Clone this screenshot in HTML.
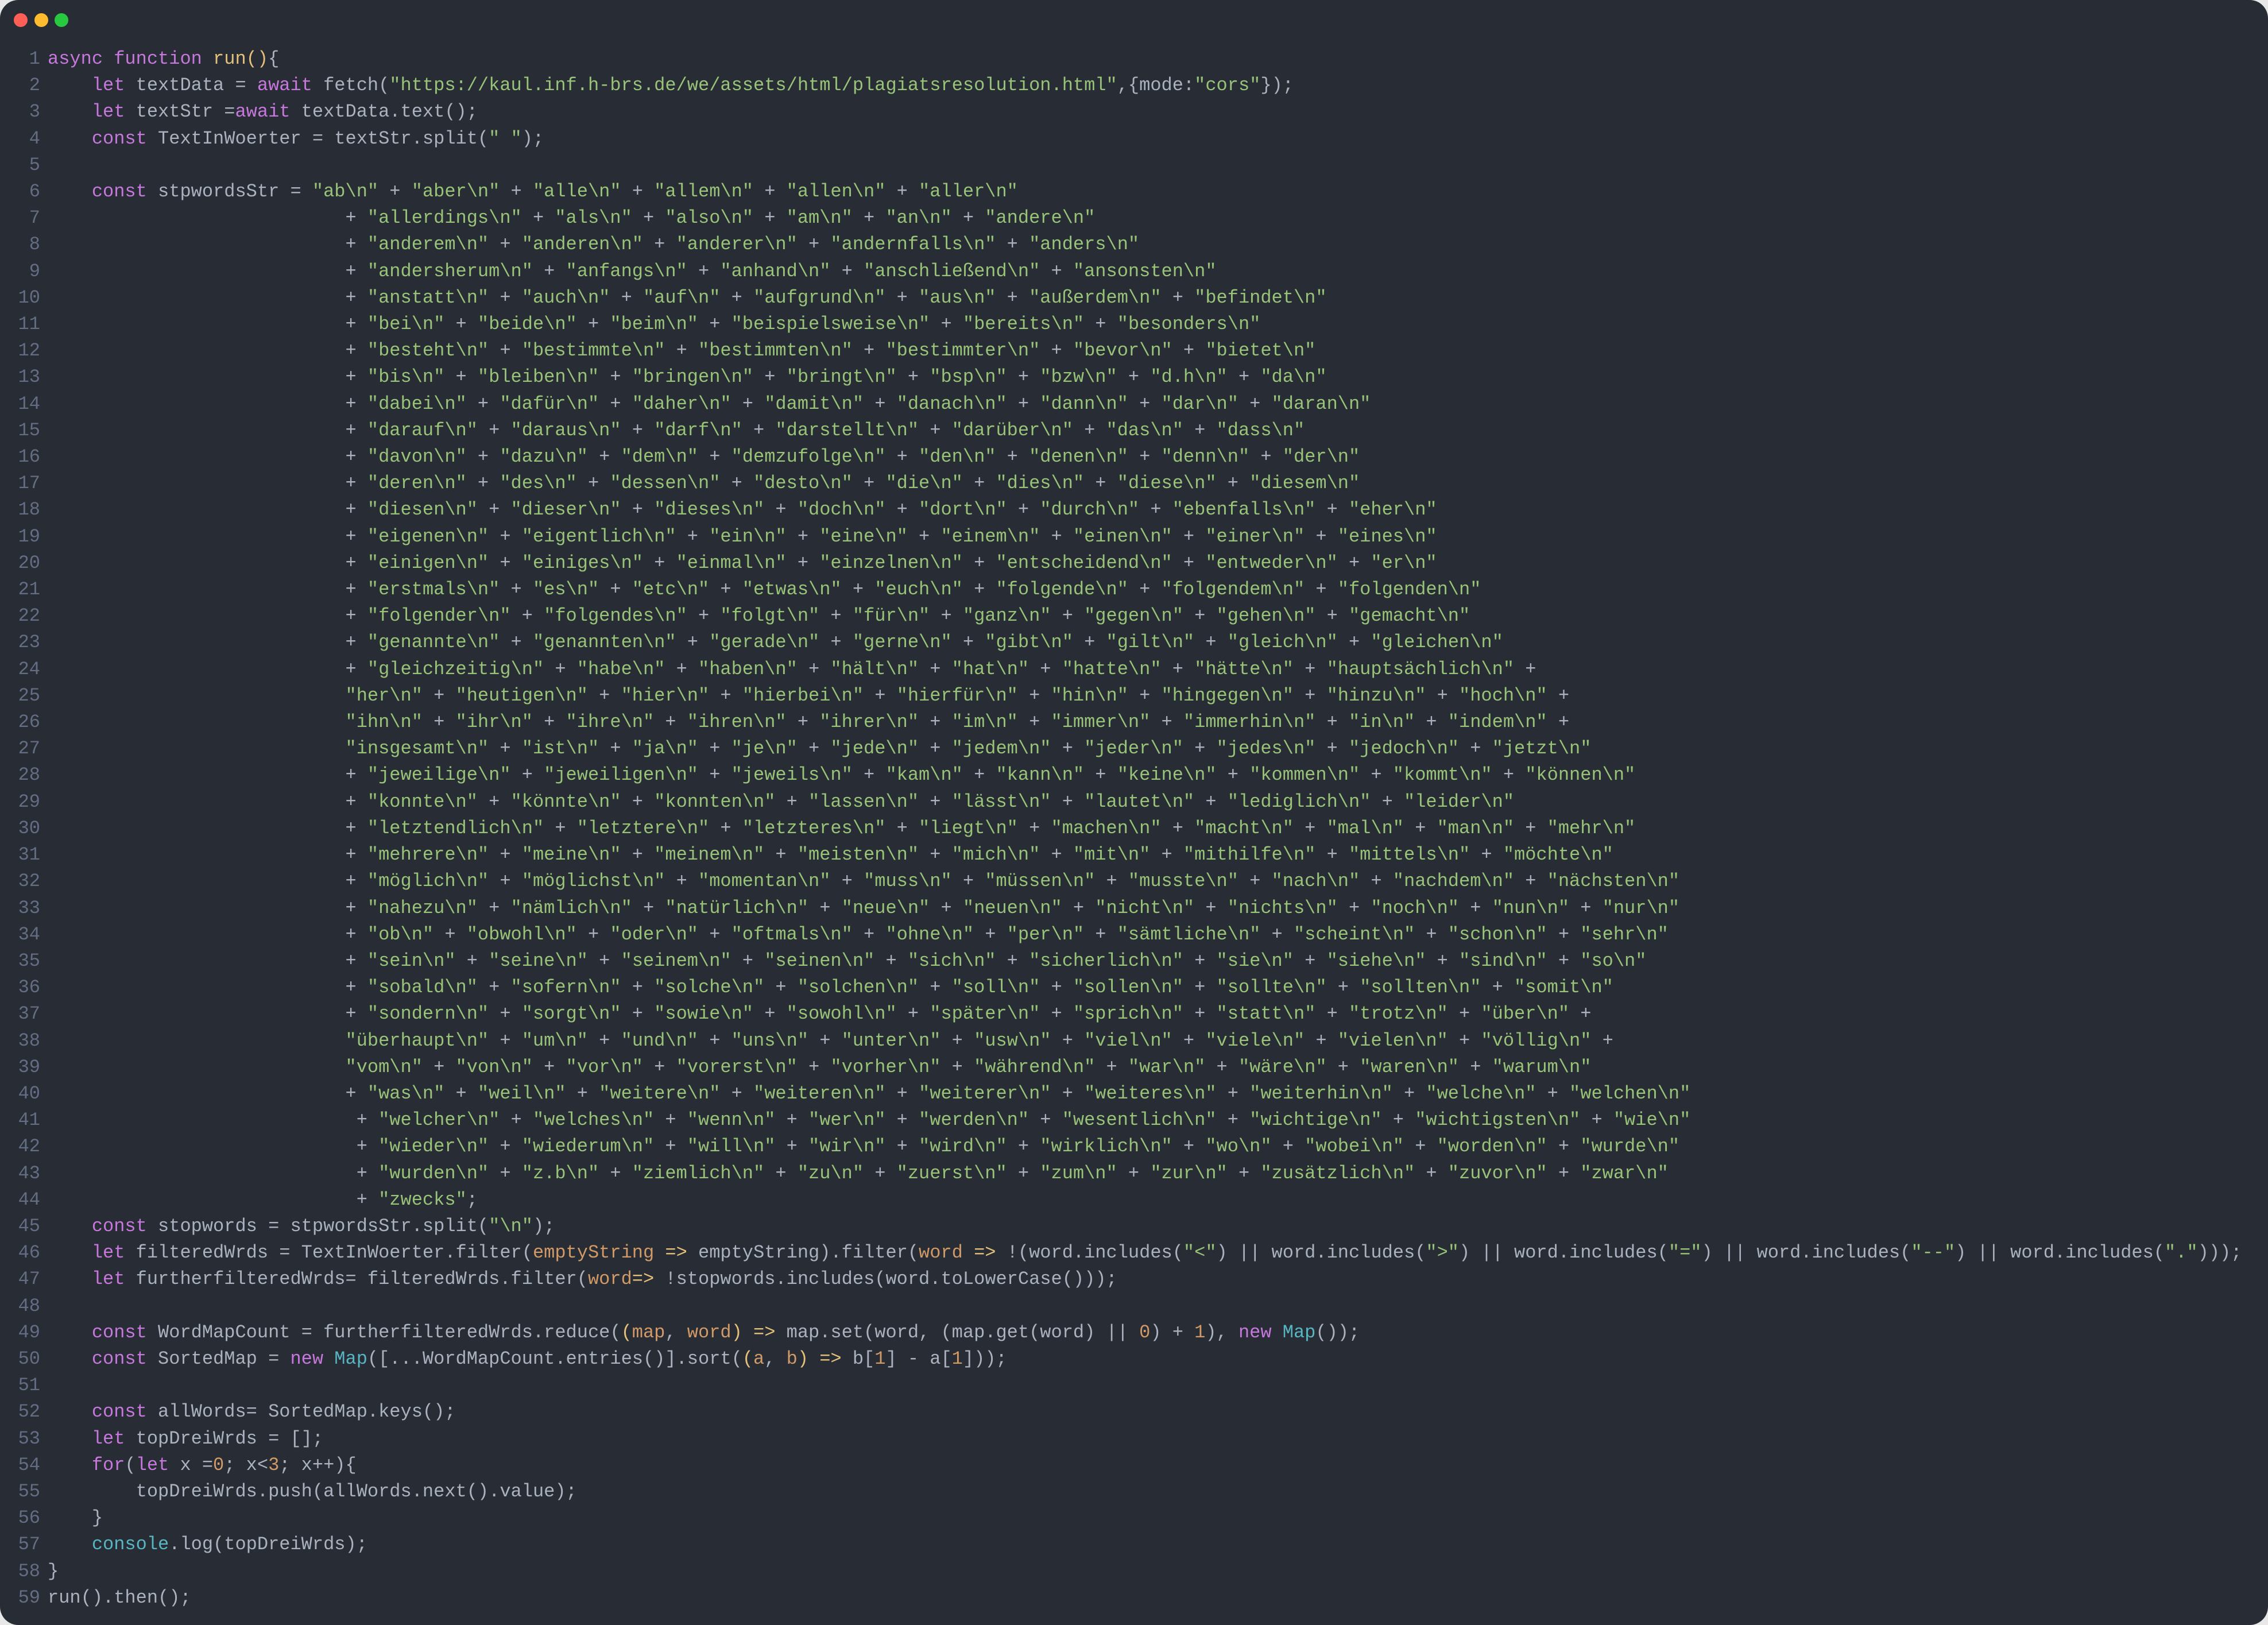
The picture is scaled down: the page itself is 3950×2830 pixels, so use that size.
<!DOCTYPE html>
<html><head><meta charset="utf-8">
<style>
html,body{margin:0;padding:0;width:3950px;height:2830px;background:#e8e8e8;overflow:hidden}
.win{position:absolute;left:0;top:0;width:3950px;height:2830px;background:#282c34;border-radius:32px;overflow:hidden}
.dot{position:absolute;top:23px;width:24px;height:24px;border-radius:50%}
.num{position:absolute;left:0;top:80px;width:70px;text-align:right;color:#636d83}
pre,.num{font-family:"Liberation Mono",monospace;font-size:32px;line-height:46.2px;margin:0}
pre{position:absolute;left:83px;top:80px;color:#abb2bf}
.k{color:#c678dd}.s{color:#98c379}.f{color:#e5c07b}.p{color:#d19a66}.c{color:#56b6c2}
</style></head><body>
<div class="win">
<div class="dot" style="left:24px;background:#ff5f57"></div>
<div class="dot" style="left:60px;background:#febc2e"></div>
<div class="dot" style="left:95px;background:#28c840"></div>
<pre class="num">1
2
3
4
5
6
7
8
9
10
11
12
13
14
15
16
17
18
19
20
21
22
23
24
25
26
27
28
29
30
31
32
33
34
35
36
37
38
39
40
41
42
43
44
45
46
47
48
49
50
51
52
53
54
55
56
57
58
59</pre>
<pre><span class="k">async</span> <span class="k">function</span> <span class="f">run()</span>{
    <span class="k">let</span> textData = <span class="k">await</span> fetch(<span class="s">"https://kaul.inf.h-brs.de/we/assets/html/plagiatsresolution.html"</span>,{mode:<span class="s">"cors"</span>});
    <span class="k">let</span> textStr =<span class="k">await</span> textData.text();
    <span class="k">const</span> TextInWoerter = textStr.split(<span class="s">" "</span>);

    <span class="k">const</span> stpwordsStr = <span class="s">"ab\n"</span> + <span class="s">"aber\n"</span> + <span class="s">"alle\n"</span> + <span class="s">"allem\n"</span> + <span class="s">"allen\n"</span> + <span class="s">"aller\n"</span>
                           + <span class="s">"allerdings\n"</span> + <span class="s">"als\n"</span> + <span class="s">"also\n"</span> + <span class="s">"am\n"</span> + <span class="s">"an\n"</span> + <span class="s">"andere\n"</span>
                           + <span class="s">"anderem\n"</span> + <span class="s">"anderen\n"</span> + <span class="s">"anderer\n"</span> + <span class="s">"andernfalls\n"</span> + <span class="s">"anders\n"</span>
                           + <span class="s">"andersherum\n"</span> + <span class="s">"anfangs\n"</span> + <span class="s">"anhand\n"</span> + <span class="s">"anschließend\n"</span> + <span class="s">"ansonsten\n"</span>
                           + <span class="s">"anstatt\n"</span> + <span class="s">"auch\n"</span> + <span class="s">"auf\n"</span> + <span class="s">"aufgrund\n"</span> + <span class="s">"aus\n"</span> + <span class="s">"außerdem\n"</span> + <span class="s">"befindet\n"</span>
                           + <span class="s">"bei\n"</span> + <span class="s">"beide\n"</span> + <span class="s">"beim\n"</span> + <span class="s">"beispielsweise\n"</span> + <span class="s">"bereits\n"</span> + <span class="s">"besonders\n"</span>
                           + <span class="s">"besteht\n"</span> + <span class="s">"bestimmte\n"</span> + <span class="s">"bestimmten\n"</span> + <span class="s">"bestimmter\n"</span> + <span class="s">"bevor\n"</span> + <span class="s">"bietet\n"</span>
                           + <span class="s">"bis\n"</span> + <span class="s">"bleiben\n"</span> + <span class="s">"bringen\n"</span> + <span class="s">"bringt\n"</span> + <span class="s">"bsp\n"</span> + <span class="s">"bzw\n"</span> + <span class="s">"d.h\n"</span> + <span class="s">"da\n"</span>
                           + <span class="s">"dabei\n"</span> + <span class="s">"dafür\n"</span> + <span class="s">"daher\n"</span> + <span class="s">"damit\n"</span> + <span class="s">"danach\n"</span> + <span class="s">"dann\n"</span> + <span class="s">"dar\n"</span> + <span class="s">"daran\n"</span>
                           + <span class="s">"darauf\n"</span> + <span class="s">"daraus\n"</span> + <span class="s">"darf\n"</span> + <span class="s">"darstellt\n"</span> + <span class="s">"darüber\n"</span> + <span class="s">"das\n"</span> + <span class="s">"dass\n"</span>
                           + <span class="s">"davon\n"</span> + <span class="s">"dazu\n"</span> + <span class="s">"dem\n"</span> + <span class="s">"demzufolge\n"</span> + <span class="s">"den\n"</span> + <span class="s">"denen\n"</span> + <span class="s">"denn\n"</span> + <span class="s">"der\n"</span>
                           + <span class="s">"deren\n"</span> + <span class="s">"des\n"</span> + <span class="s">"dessen\n"</span> + <span class="s">"desto\n"</span> + <span class="s">"die\n"</span> + <span class="s">"dies\n"</span> + <span class="s">"diese\n"</span> + <span class="s">"diesem\n"</span>
                           + <span class="s">"diesen\n"</span> + <span class="s">"dieser\n"</span> + <span class="s">"dieses\n"</span> + <span class="s">"doch\n"</span> + <span class="s">"dort\n"</span> + <span class="s">"durch\n"</span> + <span class="s">"ebenfalls\n"</span> + <span class="s">"eher\n"</span>
                           + <span class="s">"eigenen\n"</span> + <span class="s">"eigentlich\n"</span> + <span class="s">"ein\n"</span> + <span class="s">"eine\n"</span> + <span class="s">"einem\n"</span> + <span class="s">"einen\n"</span> + <span class="s">"einer\n"</span> + <span class="s">"eines\n"</span>
                           + <span class="s">"einigen\n"</span> + <span class="s">"einiges\n"</span> + <span class="s">"einmal\n"</span> + <span class="s">"einzelnen\n"</span> + <span class="s">"entscheidend\n"</span> + <span class="s">"entweder\n"</span> + <span class="s">"er\n"</span>
                           + <span class="s">"erstmals\n"</span> + <span class="s">"es\n"</span> + <span class="s">"etc\n"</span> + <span class="s">"etwas\n"</span> + <span class="s">"euch\n"</span> + <span class="s">"folgende\n"</span> + <span class="s">"folgendem\n"</span> + <span class="s">"folgenden\n"</span>
                           + <span class="s">"folgender\n"</span> + <span class="s">"folgendes\n"</span> + <span class="s">"folgt\n"</span> + <span class="s">"für\n"</span> + <span class="s">"ganz\n"</span> + <span class="s">"gegen\n"</span> + <span class="s">"gehen\n"</span> + <span class="s">"gemacht\n"</span>
                           + <span class="s">"genannte\n"</span> + <span class="s">"genannten\n"</span> + <span class="s">"gerade\n"</span> + <span class="s">"gerne\n"</span> + <span class="s">"gibt\n"</span> + <span class="s">"gilt\n"</span> + <span class="s">"gleich\n"</span> + <span class="s">"gleichen\n"</span>
                           + <span class="s">"gleichzeitig\n"</span> + <span class="s">"habe\n"</span> + <span class="s">"haben\n"</span> + <span class="s">"hält\n"</span> + <span class="s">"hat\n"</span> + <span class="s">"hatte\n"</span> + <span class="s">"hätte\n"</span> + <span class="s">"hauptsächlich\n"</span> +
                           <span class="s">"her\n"</span> + <span class="s">"heutigen\n"</span> + <span class="s">"hier\n"</span> + <span class="s">"hierbei\n"</span> + <span class="s">"hierfür\n"</span> + <span class="s">"hin\n"</span> + <span class="s">"hingegen\n"</span> + <span class="s">"hinzu\n"</span> + <span class="s">"hoch\n"</span> +
                           <span class="s">"ihn\n"</span> + <span class="s">"ihr\n"</span> + <span class="s">"ihre\n"</span> + <span class="s">"ihren\n"</span> + <span class="s">"ihrer\n"</span> + <span class="s">"im\n"</span> + <span class="s">"immer\n"</span> + <span class="s">"immerhin\n"</span> + <span class="s">"in\n"</span> + <span class="s">"indem\n"</span> +
                           <span class="s">"insgesamt\n"</span> + <span class="s">"ist\n"</span> + <span class="s">"ja\n"</span> + <span class="s">"je\n"</span> + <span class="s">"jede\n"</span> + <span class="s">"jedem\n"</span> + <span class="s">"jeder\n"</span> + <span class="s">"jedes\n"</span> + <span class="s">"jedoch\n"</span> + <span class="s">"jetzt\n"</span>
                           + <span class="s">"jeweilige\n"</span> + <span class="s">"jeweiligen\n"</span> + <span class="s">"jeweils\n"</span> + <span class="s">"kam\n"</span> + <span class="s">"kann\n"</span> + <span class="s">"keine\n"</span> + <span class="s">"kommen\n"</span> + <span class="s">"kommt\n"</span> + <span class="s">"können\n"</span>
                           + <span class="s">"konnte\n"</span> + <span class="s">"könnte\n"</span> + <span class="s">"konnten\n"</span> + <span class="s">"lassen\n"</span> + <span class="s">"lässt\n"</span> + <span class="s">"lautet\n"</span> + <span class="s">"lediglich\n"</span> + <span class="s">"leider\n"</span>
                           + <span class="s">"letztendlich\n"</span> + <span class="s">"letztere\n"</span> + <span class="s">"letzteres\n"</span> + <span class="s">"liegt\n"</span> + <span class="s">"machen\n"</span> + <span class="s">"macht\n"</span> + <span class="s">"mal\n"</span> + <span class="s">"man\n"</span> + <span class="s">"mehr\n"</span>
                           + <span class="s">"mehrere\n"</span> + <span class="s">"meine\n"</span> + <span class="s">"meinem\n"</span> + <span class="s">"meisten\n"</span> + <span class="s">"mich\n"</span> + <span class="s">"mit\n"</span> + <span class="s">"mithilfe\n"</span> + <span class="s">"mittels\n"</span> + <span class="s">"möchte\n"</span>
                           + <span class="s">"möglich\n"</span> + <span class="s">"möglichst\n"</span> + <span class="s">"momentan\n"</span> + <span class="s">"muss\n"</span> + <span class="s">"müssen\n"</span> + <span class="s">"musste\n"</span> + <span class="s">"nach\n"</span> + <span class="s">"nachdem\n"</span> + <span class="s">"nächsten\n"</span>
                           + <span class="s">"nahezu\n"</span> + <span class="s">"nämlich\n"</span> + <span class="s">"natürlich\n"</span> + <span class="s">"neue\n"</span> + <span class="s">"neuen\n"</span> + <span class="s">"nicht\n"</span> + <span class="s">"nichts\n"</span> + <span class="s">"noch\n"</span> + <span class="s">"nun\n"</span> + <span class="s">"nur\n"</span>
                           + <span class="s">"ob\n"</span> + <span class="s">"obwohl\n"</span> + <span class="s">"oder\n"</span> + <span class="s">"oftmals\n"</span> + <span class="s">"ohne\n"</span> + <span class="s">"per\n"</span> + <span class="s">"sämtliche\n"</span> + <span class="s">"scheint\n"</span> + <span class="s">"schon\n"</span> + <span class="s">"sehr\n"</span>
                           + <span class="s">"sein\n"</span> + <span class="s">"seine\n"</span> + <span class="s">"seinem\n"</span> + <span class="s">"seinen\n"</span> + <span class="s">"sich\n"</span> + <span class="s">"sicherlich\n"</span> + <span class="s">"sie\n"</span> + <span class="s">"siehe\n"</span> + <span class="s">"sind\n"</span> + <span class="s">"so\n"</span>
                           + <span class="s">"sobald\n"</span> + <span class="s">"sofern\n"</span> + <span class="s">"solche\n"</span> + <span class="s">"solchen\n"</span> + <span class="s">"soll\n"</span> + <span class="s">"sollen\n"</span> + <span class="s">"sollte\n"</span> + <span class="s">"sollten\n"</span> + <span class="s">"somit\n"</span>
                           + <span class="s">"sondern\n"</span> + <span class="s">"sorgt\n"</span> + <span class="s">"sowie\n"</span> + <span class="s">"sowohl\n"</span> + <span class="s">"später\n"</span> + <span class="s">"sprich\n"</span> + <span class="s">"statt\n"</span> + <span class="s">"trotz\n"</span> + <span class="s">"über\n"</span> +
                           <span class="s">"überhaupt\n"</span> + <span class="s">"um\n"</span> + <span class="s">"und\n"</span> + <span class="s">"uns\n"</span> + <span class="s">"unter\n"</span> + <span class="s">"usw\n"</span> + <span class="s">"viel\n"</span> + <span class="s">"viele\n"</span> + <span class="s">"vielen\n"</span> + <span class="s">"völlig\n"</span> +
                           <span class="s">"vom\n"</span> + <span class="s">"von\n"</span> + <span class="s">"vor\n"</span> + <span class="s">"vorerst\n"</span> + <span class="s">"vorher\n"</span> + <span class="s">"während\n"</span> + <span class="s">"war\n"</span> + <span class="s">"wäre\n"</span> + <span class="s">"waren\n"</span> + <span class="s">"warum\n"</span>
                           + <span class="s">"was\n"</span> + <span class="s">"weil\n"</span> + <span class="s">"weitere\n"</span> + <span class="s">"weiteren\n"</span> + <span class="s">"weiterer\n"</span> + <span class="s">"weiteres\n"</span> + <span class="s">"weiterhin\n"</span> + <span class="s">"welche\n"</span> + <span class="s">"welchen\n"</span>
                            + <span class="s">"welcher\n"</span> + <span class="s">"welches\n"</span> + <span class="s">"wenn\n"</span> + <span class="s">"wer\n"</span> + <span class="s">"werden\n"</span> + <span class="s">"wesentlich\n"</span> + <span class="s">"wichtige\n"</span> + <span class="s">"wichtigsten\n"</span> + <span class="s">"wie\n"</span>
                            + <span class="s">"wieder\n"</span> + <span class="s">"wiederum\n"</span> + <span class="s">"will\n"</span> + <span class="s">"wir\n"</span> + <span class="s">"wird\n"</span> + <span class="s">"wirklich\n"</span> + <span class="s">"wo\n"</span> + <span class="s">"wobei\n"</span> + <span class="s">"worden\n"</span> + <span class="s">"wurde\n"</span>
                            + <span class="s">"wurden\n"</span> + <span class="s">"z.b\n"</span> + <span class="s">"ziemlich\n"</span> + <span class="s">"zu\n"</span> + <span class="s">"zuerst\n"</span> + <span class="s">"zum\n"</span> + <span class="s">"zur\n"</span> + <span class="s">"zusätzlich\n"</span> + <span class="s">"zuvor\n"</span> + <span class="s">"zwar\n"</span>
                            + <span class="s">"zwecks"</span>;
    <span class="k">const</span> stopwords = stpwordsStr.split(<span class="s">"\n"</span>);
    <span class="k">let</span> filteredWrds = TextInWoerter.filter(<span class="p">emptyString</span> <span class="f">=&gt;</span> emptyString).filter(<span class="p">word</span> <span class="f">=&gt;</span> !(word.includes(<span class="s">"&lt;"</span>) || word.includes(<span class="s">"&gt;"</span>) || word.includes(<span class="s">"="</span>) || word.includes(<span class="s">"--"</span>) || word.includes(<span class="s">"."</span>)));
    <span class="k">let</span> furtherfilteredWrds= filteredWrds.filter(<span class="p">word</span><span class="f">=&gt;</span> !stopwords.includes(word.toLowerCase()));

    <span class="k">const</span> WordMapCount = furtherfilteredWrds.reduce(<span class="f">(</span><span class="p">map</span>, <span class="p">word</span><span class="f">)</span> <span class="f">=&gt;</span> map.set(word, (map.get(word) || <span class="p">0</span>) + <span class="p">1</span>), <span class="k">new</span> <span class="c">Map</span>());
    <span class="k">const</span> SortedMap = <span class="k">new</span> <span class="c">Map</span>([...WordMapCount.entries()].sort(<span class="f">(</span><span class="p">a</span>, <span class="p">b</span><span class="f">)</span> <span class="f">=&gt;</span> b[<span class="p">1</span>] - a[<span class="p">1</span>]));

    <span class="k">const</span> allWords= SortedMap.keys();
    <span class="k">let</span> topDreiWrds = [];
    <span class="k">for</span>(<span class="k">let</span> x =<span class="p">0</span>; x&lt;<span class="p">3</span>; x++){
        topDreiWrds.push(allWords.next().value);
    }
    <span class="c">console</span>.log(topDreiWrds);
}
run().then();</pre>
</div>
</body></html>
